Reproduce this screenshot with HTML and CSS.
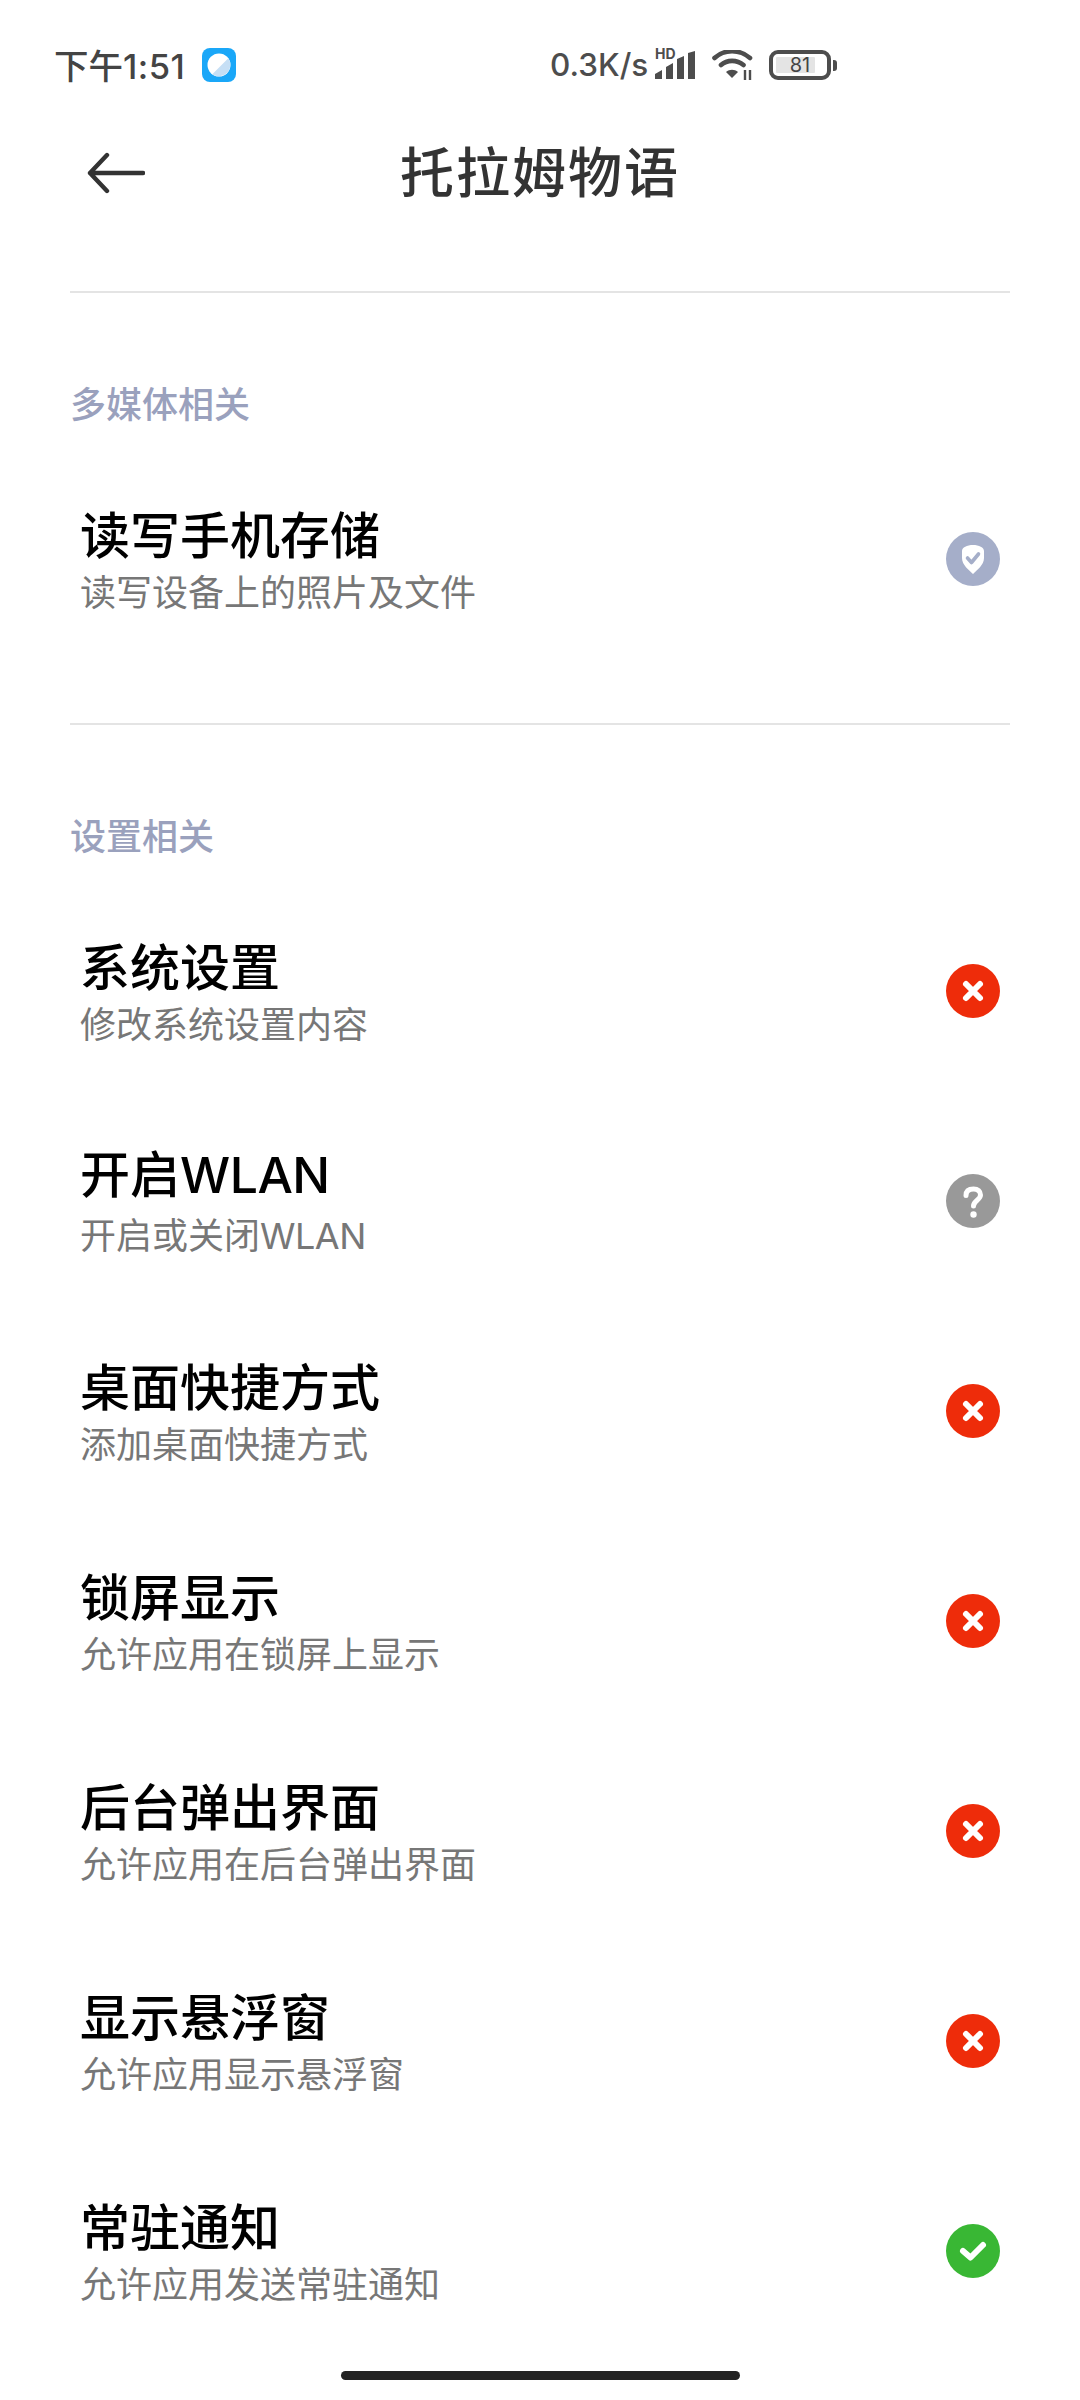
FILE: index.html
```html
<!DOCTYPE html>
<html lang="zh-CN">
<head>
<meta charset="utf-8">
<title>托拉姆物语</title>
<link rel="stylesheet" href="styles.css">
</head>
<body>
<svg class="defs" width="0" height="0" aria-hidden="true">
  <symbol id="i-x" viewBox="0 0 54 54"><circle cx="27" cy="27" r="27" fill="#ee2c0a"/><path d="M20 20L34 34M34 20L20 34" stroke="#fff" stroke-width="6" stroke-linecap="round" fill="none"/></symbol>
  <symbol id="i-q" viewBox="0 0 54 54"><circle cx="27" cy="27" r="27" fill="#999999"/><path d="M20 21.500C20 17 23 15 27.500 15C32 15 34.500 17.500 34.500 21C34.500 26 27.500 26.500 27.500 32" stroke="#fff" stroke-width="5" stroke-linecap="round" fill="none"/><circle cx="27.500" cy="40.500" r="3.200" fill="#fff"/></symbol>
  <symbol id="i-ok" viewBox="0 0 54 54"><circle cx="27" cy="27" r="27" fill="#39b734"/><path d="M17 27L24.500 33.500L37 21" stroke="#fff" stroke-width="6" stroke-linecap="round" stroke-linejoin="round" fill="none"/></symbol>
  <symbol id="i-shield" viewBox="0 0 54 54"><circle cx="27" cy="27" r="27" fill="#a5aec9"/><path d="M27 13C33 13 38 15.500 38 19V26C38 33 31 38 27 42C23 38 16 33 16 26V19C16 15.500 21 13 27 13Z" fill="#fff"/><path d="M21.500 26L25.500 30.500L32.500 22" stroke="#a5aec9" stroke-width="3.600" stroke-linecap="round" stroke-linejoin="round" fill="none"/></symbol>
</svg>
<div class="page">
  <div class="status">
    <div class="status-left">
      <span class="time">下午<span class="clock">1:51</span></span>
      <svg class="app-icon" viewBox="0 0 34 34"><rect width="34" height="34" rx="8" fill="#1aa7f8"/><circle cx="17" cy="17" r="11.500" fill="#fff"/><path d="M26.300 10.300A11.500 11.500 0 0 1 10.300 26.300Z" fill="#c6dff5"/></svg>
    </div>
    <div class="status-right">
      <span class="speed">0.3K/s</span>
      <span class="signal">
        <span class="hd">HD</span>
        <svg class="bars" viewBox="0 0 40 28"><path d="M0 28V23L7 19V28ZM11 28V16L18 12V28ZM22 28V8L29 5V28ZM33 28V2L40 0V28Z" fill="#4d4d4d"/></svg>
      </span>
      <svg class="wifi" viewBox="0 0 41 30"><path d="M2.500 8C12 -1 28 -1 38 8M9 15C15 9.500 25 9.500 31.500 15" stroke="#4d4d4d" stroke-width="4.600" stroke-linecap="round" fill="none"/><path d="M14 22C17.500 19 22.500 19 26 22L20 28Z" fill="#4d4d4d"/><path d="M33 20V30M38 20V30" stroke="#4d4d4d" stroke-width="2.400" fill="none"/></svg>
      <span class="battery">
        <span class="battery-body"><span class="battery-fill"></span><span class="battery-num">81</span></span>
        <span class="battery-cap"></span>
      </span>
    </div>
  </div>
  <header class="header">
    <svg class="back" viewBox="0 0 58 42"><path d="M56 21H3M20 3L3 21L20 39" stroke="#333" stroke-width="4.400" stroke-linecap="round" stroke-linejoin="round" fill="none"/></svg>
    <h1 class="title">托拉姆物语</h1>
  </header>

  <section class="section">
    <h2 class="section-title">多媒体相关</h2>
    <div class="row"><div class="text"><div class="name">读写手机存储</div><div class="desc">读写设备上的照片及文件</div></div><svg class="state"><use href="#i-shield"/></svg></div>
  </section>

  <section class="section">
    <h2 class="section-title">设置相关</h2>
    <div class="row"><div class="text"><div class="name">系统设置</div><div class="desc">修改系统设置内容</div></div><svg class="state"><use href="#i-x"/></svg></div>
    <div class="row"><div class="text"><div class="name">开启<span class="latin">WLAN</span></div><div class="desc">开启或关闭<span class="latin">WLAN</span></div></div><svg class="state"><use href="#i-q"/></svg></div>
    <div class="row"><div class="text"><div class="name">桌面快捷方式</div><div class="desc">添加桌面快捷方式</div></div><svg class="state"><use href="#i-x"/></svg></div>
    <div class="row"><div class="text"><div class="name">锁屏显示</div><div class="desc">允许应用在锁屏上显示</div></div><svg class="state"><use href="#i-x"/></svg></div>
    <div class="row"><div class="text"><div class="name">后台弹出界面</div><div class="desc">允许应用在后台弹出界面</div></div><svg class="state"><use href="#i-x"/></svg></div>
    <div class="row"><div class="text"><div class="name">显示悬浮窗</div><div class="desc">允许应用显示悬浮窗</div></div><svg class="state"><use href="#i-x"/></svg></div>
    <div class="row"><div class="text"><div class="name">常驻通知</div><div class="desc">允许应用发送常驻通知</div></div><svg class="state"><use href="#i-ok"/></svg></div>
  </section>

  <div class="home-wrap"><div class="home-bar"></div></div>
</div>
</body>
</html>
```

FILE: styles.css
```css
* { box-sizing: border-box; }
html, body { margin: 0; padding: 0; background: #fff; }
body {
  width: 1080px;
  height: 2400px;
  overflow: hidden;
  font-family: "Noto Sans CJK SC", "Noto Sans", sans-serif;
  color: #000;
}
.defs { display: block; height: 0; }
.page { width: 1080px; height: 2400px; display: flex; flex-direction: column; }
.latin { font-family: "Inter", "Noto Sans", sans-serif; letter-spacing: -0.5px; }
.clock { font-family: "Inter", "Noto Sans", sans-serif; letter-spacing: 0.500px; }

.status {
  height: 130px;
  display: flex;
  align-items: center;
  padding: 0 0 0 54px;
  color: #444;
}
.status-left { width: 496px; display: flex; align-items: center; gap: 17px; }
.time { font-size: 34.500px; font-weight: 500; line-height: 40px; }
.app-icon { width: 34px; height: 34px; }
.status-right { display: flex; align-items: center; }
.speed { width: 98px; font-family: "Inter", sans-serif; font-size: 31.500px; font-weight: 500; line-height: 40px; color: #4d4d4d; white-space: nowrap; }
.signal { position: relative; width: 40px; height: 28px; margin-left: 7px; }
.hd { position: absolute; left: 0; top: -4px; font: 700 14px/14px "Inter", sans-serif; color: #4d4d4d; }
.bars { position: absolute; left: 0; bottom: 0; width: 40px; height: 28px; clip-path: polygon(0 40%, 55% 40%, 55% 0, 100% 0, 100% 100%, 0 100%); }
.wifi { width: 41px; height: 30px; margin-left: 17px; }
.battery { display: flex; align-items: center; margin-left: 16px; }
.battery-body {
  position: relative;
  width: 62px;
  height: 30px;
  border: 4px solid #4d4d4d;
  border-radius: 9px;
}
.battery-fill { position: absolute; left: 3px; top: 3px; bottom: 3px; width: 39px; background: #e4e4e4; border-radius: 1px; }
.battery-num { position: absolute; inset: 0; text-align: center; font: 400 20px/22px "Inter", sans-serif; color: #444; }
.battery-cap { width: 4px; height: 11px; margin-left: 2px; background: #4d4d4d; border-radius: 0 3px 3px 0; }

.header {
  position: relative;
  height: 86px;
  display: flex;
  align-items: center;
  justify-content: center;
}
.back { position: absolute; left: 87px; top: 22px; width: 58px; height: 42px; }
.title { margin: 0 0 6px; font-size: 54px; line-height: 70px; font-weight: 500; color: #333; letter-spacing: 2px; }

.section { margin: 0 70px; border-top: 2px solid #e4e4e4; }
.section:first-of-type { margin-top: 75px; }
.section + .section { margin-top: 60px; }
.section-title {
  margin: 0;
  height: 160px;
  padding-top: 84px;
  font-size: 36px;
  line-height: 50px;
  font-weight: 500;
  color: #9aa1bd;
}
.row {
  height: 210px;
  margin: 0 10px 0 10px;
  display: flex;
  align-items: center;
  justify-content: space-between;
}
.text { display: flex; flex-direction: column; padding-top: 1px; }
.name { font-size: 50px; line-height: 60px; font-weight: 500; color: #000; }
.desc { font-size: 36px; line-height: 50px; margin-top: 3px; color: #777; }
.state { width: 54px; height: 54px; flex: none; position: relative; top: 1px; }

.home-wrap { flex: 1; display: flex; justify-content: center; }
.home-bar { width: 399px; height: 9px; margin-top: 16px; border-radius: 5px; background: #222; }
```
